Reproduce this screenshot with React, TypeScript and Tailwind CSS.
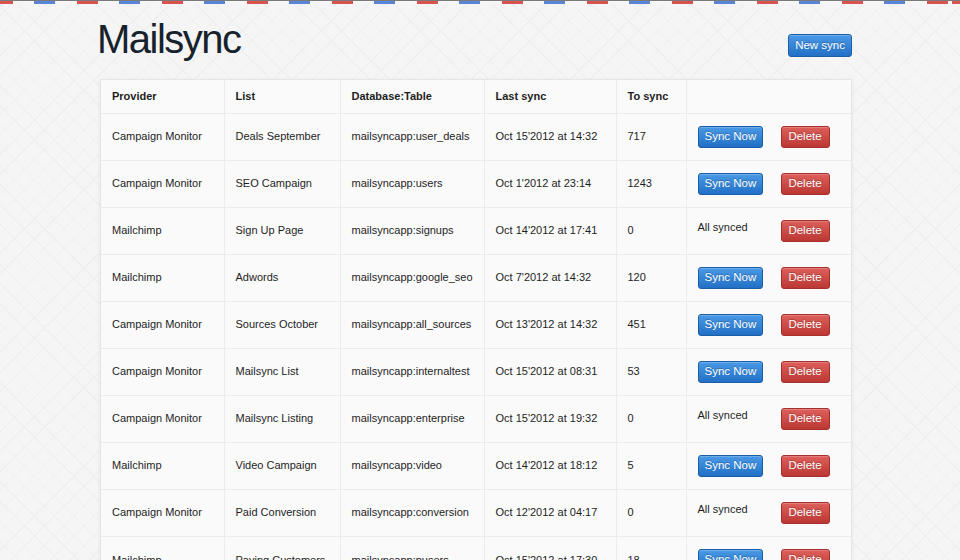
type Sync = {
  provider: string;
  list: string;
  table: string;
  last: string;
  pending: number;
};

const syncs: Sync[] = [
  { provider: "Campaign Monitor", list: "Deals September", table: "mailsyncapp:user_deals", last: "Oct 15'2012 at 14:32", pending: 717 },
  { provider: "Campaign Monitor", list: "SEO Campaign", table: "mailsyncapp:users", last: "Oct 1'2012 at 23:14", pending: 1243 },
  { provider: "Mailchimp", list: "Sign Up Page", table: "mailsyncapp:signups", last: "Oct 14'2012 at 17:41", pending: 0 },
  { provider: "Mailchimp", list: "Adwords", table: "mailsyncapp:google_seo", last: "Oct 7'2012 at 14:32", pending: 120 },
  { provider: "Campaign Monitor", list: "Sources October", table: "mailsyncapp:all_sources", last: "Oct 13'2012 at 14:32", pending: 451 },
  { provider: "Campaign Monitor", list: "Mailsync List", table: "mailsyncapp:internaltest", last: "Oct 15'2012 at 08:31", pending: 53 },
  { provider: "Campaign Monitor", list: "Mailsync Listing", table: "mailsyncapp:enterprise", last: "Oct 15'2012 at 19:32", pending: 0 },
  { provider: "Mailchimp", list: "Video Campaign", table: "mailsyncapp:video", last: "Oct 14'2012 at 18:12", pending: 5 },
  { provider: "Campaign Monitor", list: "Paid Conversion", table: "mailsyncapp:conversion", last: "Oct 12'2012 at 04:17", pending: 0 },
  { provider: "Mailchimp", list: "Paying Customers", table: "mailsyncapp:pusers", last: "Oct 15'2012 at 17:30", pending: 18 },
];

const blueBtn =
  "h-[22px] px-[6px] rounded-[3px] border border-[#1c5ea6] bg-gradient-to-b from-[#4a9ae6] to-[#2170c6] text-white text-[11.5px] leading-none [text-shadow:0_-1px_0_rgba(0,0,0,0.25)] shadow-[inset_0_1px_0_rgba(255,255,255,0.2)]";
const redBtn =
  "h-[22px] px-[6px] rounded-[3px] border border-[#a6302d] bg-gradient-to-b from-[#de5f5b] to-[#bb3733] text-white text-[11.5px] leading-none [text-shadow:0_-1px_0_rgba(0,0,0,0.25)] shadow-[inset_0_1px_0_rgba(255,255,255,0.2)]";

const th = "h-[33px] pl-[11px] text-left font-bold border-l border-[#ececec] first:border-l-0";
const td = "h-[47px] pl-[11px] border-l border-[#ececec] first:border-l-0 whitespace-nowrap";

export default function App() {
  return (
    <div
      className="h-[560px] overflow-hidden bg-[#f5f5f5] bg-[repeating-linear-gradient(45deg,transparent_0,transparent_13px,#efefef_13px,#efefef_14px),repeating-linear-gradient(-45deg,transparent_0,transparent_13px,#efefef_13px,#efefef_14px)] text-[#1e1e1e]"
      style={{ fontFamily: '"Liberation Sans", Arial, sans-serif' }}
    >
      {/* airmail stripe */}
      <div className="h-[4px] border-t border-[#7a7a7a] bg-[#f6f6f6] bg-[repeating-linear-gradient(90deg,#d9534f_0,#d9534f_21px,#f6f6f6_21px,#f6f6f6_42px,#5b84d6_42px,#5b84d6_63px,#f6f6f6_63px,#f6f6f6_85px)] bg-[position:-8px_0]" />

      <div className="ml-[100px] w-[752px] pt-[15px]">
        <div className="flex items-start justify-between">
          <h1 className="ml-[-3px] text-[40px] leading-none text-[#17222d] tracking-[-1.5px]">Mailsync</h1>
          <button className={`${blueBtn} mt-[15px] h-[23px]`}>New sync</button>
        </div>

        <div className="mt-[20px] bg-[#fafafa] border border-[#e6e6e6] shadow-[0_1px_3px_rgba(0,0,0,0.08)]">
          <table className="w-full table-fixed border-collapse text-[11px]">
            <colgroup>
              <col className="w-[123px]" />
              <col className="w-[116px]" />
              <col className="w-[144px]" />
              <col className="w-[132px]" />
              <col className="w-[70px]" />
              <col />
            </colgroup>
            <thead>
              <tr>
                <th className={th}>Provider</th>
                <th className={th}>List</th>
                <th className={th}>Database:Table</th>
                <th className={th}>Last sync</th>
                <th className={th}>To sync</th>
                <th className={th}></th>
              </tr>
            </thead>
            <tbody>
              {syncs.map((s, i) => (
                <tr key={i} className="border-t border-[#ececec]">
                  <td className={td}>{s.provider}</td>
                  <td className={td}>{s.list}</td>
                  <td className={td}>{s.table}</td>
                  <td className={td}>{s.last}</td>
                  <td className={td}>{s.pending}</td>
                  <td className={td}>
                    <div className="flex items-center gap-[18px]">
                      <div className="w-[65px]">
                        {s.pending > 0 ? (
                          <button className={`${blueBtn} w-[65px]`}>Sync Now</button>
                        ) : (
                          <span className="block -mt-[6px]">All synced</span>
                        )}
                      </div>
                      <button className={`${redBtn} w-[49px]`}>Delete</button>
                    </div>
                  </td>
                </tr>
              ))}
            </tbody>
          </table>
        </div>
      </div>
    </div>
  );
}
